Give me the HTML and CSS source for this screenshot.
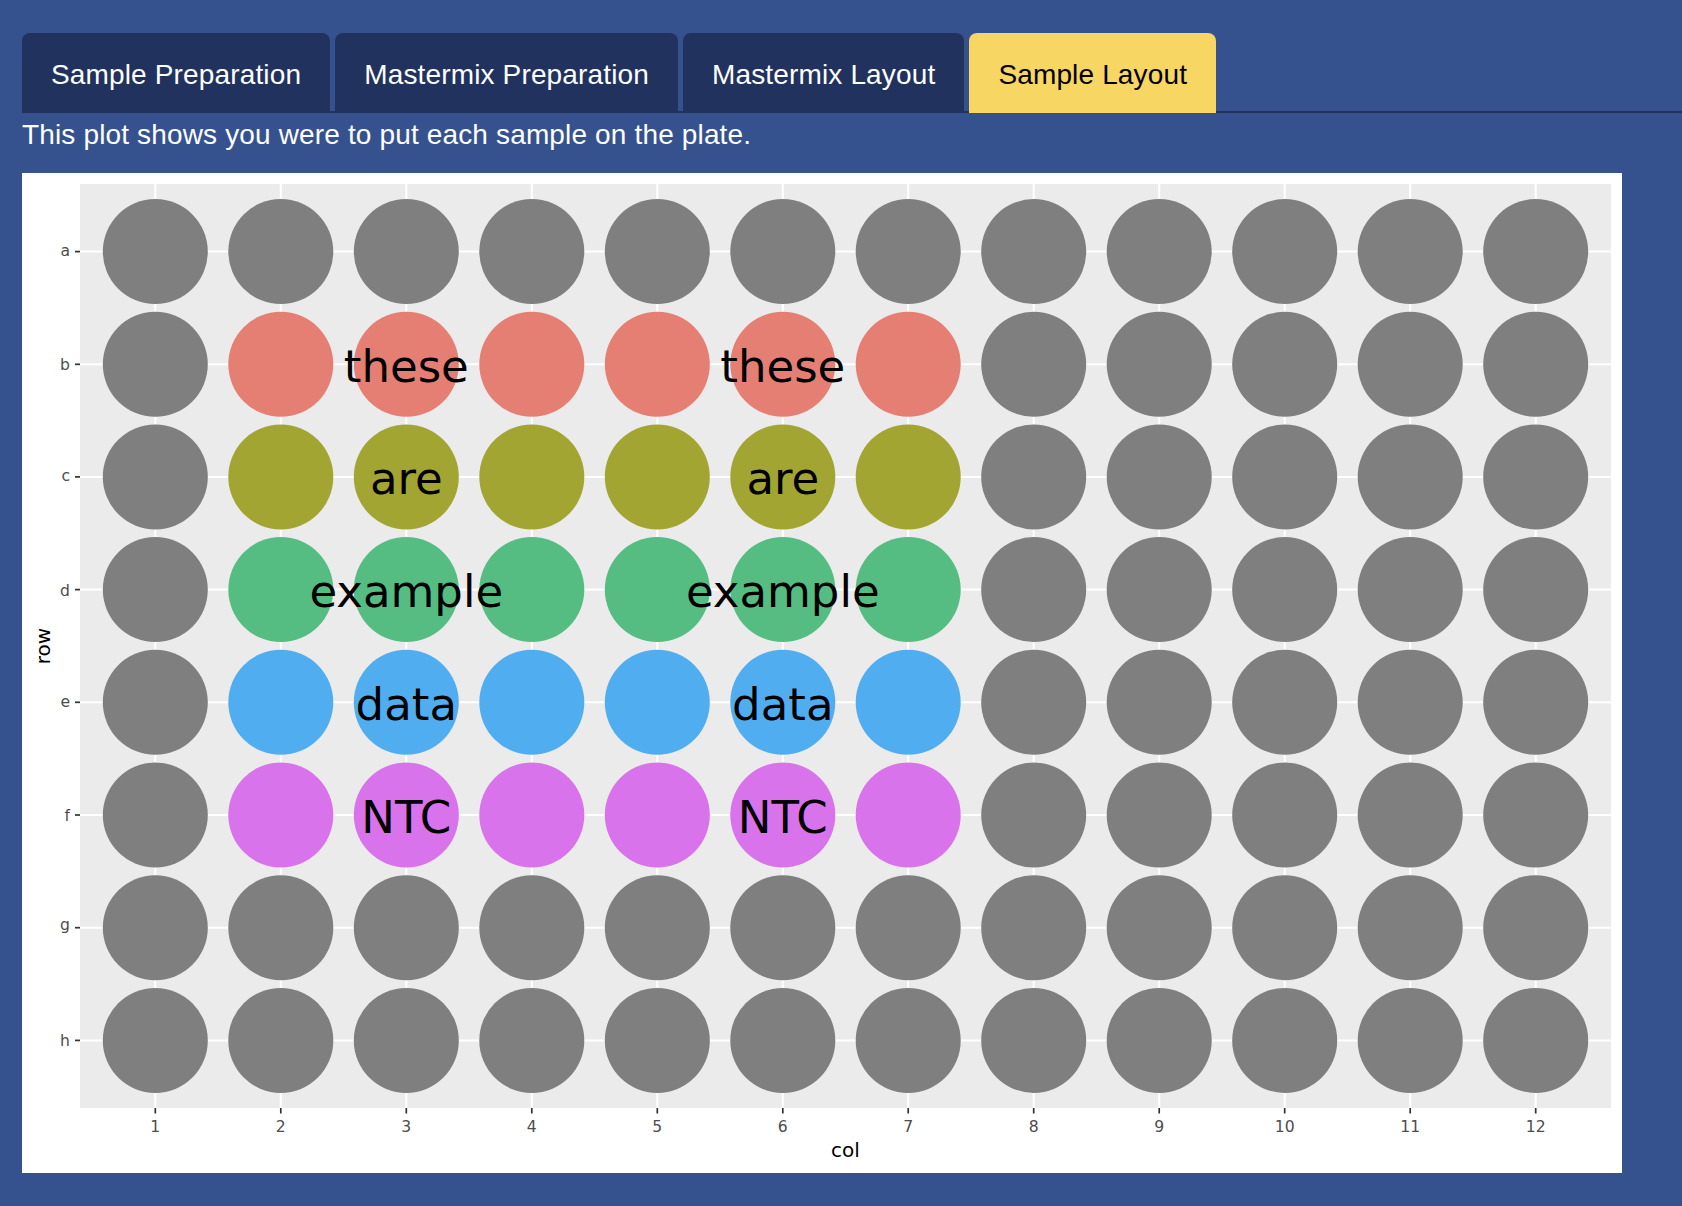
FILE: index.html
```html
<!DOCTYPE html>
<html lang="en">
<head>
<meta charset="utf-8">
<title>Sample Layout</title>
<link rel="stylesheet" href="styles.css">
</head>
<body>
<div class="page">
  <ul class="tabs">
    <li class="tab"><a>Sample Preparation</a></li>
    <li class="tab"><a>Mastermix Preparation</a></li>
    <li class="tab"><a>Mastermix Layout</a></li>
    <li class="tab active"><a>Sample Layout</a></li>
  </ul>
  <div class="tab-content">
    <p class="desc">This plot shows you were to put each sample on the plate.</p>
    <div class="plot">
      <svg class="chart" width="1600" height="1000" viewBox="0 0 1600 1000" xmlns="http://www.w3.org/2000/svg">
        <rect class="panel" x="58" y="11" width="1531" height="924"/>
        <g class="grid">
          <line x1="133.3" y1="11" x2="133.3" y2="935"/>
          <line x1="258.8" y1="11" x2="258.8" y2="935"/>
          <line x1="384.3" y1="11" x2="384.3" y2="935"/>
          <line x1="509.8" y1="11" x2="509.8" y2="935"/>
          <line x1="635.3" y1="11" x2="635.3" y2="935"/>
          <line x1="760.8" y1="11" x2="760.8" y2="935"/>
          <line x1="886.2" y1="11" x2="886.2" y2="935"/>
          <line x1="1011.7" y1="11" x2="1011.7" y2="935"/>
          <line x1="1137.2" y1="11" x2="1137.2" y2="935"/>
          <line x1="1262.7" y1="11" x2="1262.7" y2="935"/>
          <line x1="1388.2" y1="11" x2="1388.2" y2="935"/>
          <line x1="1513.7" y1="11" x2="1513.7" y2="935"/>
          <line x1="58" y1="78.6" x2="1589" y2="78.6"/>
          <line x1="58" y1="191.3" x2="1589" y2="191.3"/>
          <line x1="58" y1="303.9" x2="1589" y2="303.9"/>
          <line x1="58" y1="416.6" x2="1589" y2="416.6"/>
          <line x1="58" y1="529.3" x2="1589" y2="529.3"/>
          <line x1="58" y1="642" x2="1589" y2="642"/>
          <line x1="58" y1="754.7" x2="1589" y2="754.7"/>
          <line x1="58" y1="867.4" x2="1589" y2="867.4"/>
        </g>
        <!-- row a -->
        <g class="gray" transform="translate(0,78.6)">
          <circle cx="133.3" r="52.5"/><circle cx="258.8" r="52.5"/><circle cx="384.3" r="52.5"/><circle cx="509.8" r="52.5"/><circle cx="635.3" r="52.5"/><circle cx="760.8" r="52.5"/><circle cx="886.2" r="52.5"/><circle cx="1011.7" r="52.5"/><circle cx="1137.2" r="52.5"/><circle cx="1262.7" r="52.5"/><circle cx="1388.2" r="52.5"/><circle cx="1513.7" r="52.5"/>
        </g>
        <!-- row b -->
        <g transform="translate(0,191.3)">
          <g class="gray"><circle cx="133.3" r="52.5"/><circle cx="1011.7" r="52.5"/><circle cx="1137.2" r="52.5"/><circle cx="1262.7" r="52.5"/><circle cx="1388.2" r="52.5"/><circle cx="1513.7" r="52.5"/></g>
          <g class="c-red"><circle cx="258.8" r="52.5"/><circle cx="384.3" r="52.5"/><circle cx="509.8" r="52.5"/><circle cx="635.3" r="52.5"/><circle cx="760.8" r="52.5"/><circle cx="886.2" r="52.5"/></g>
        </g>
        <!-- row c -->
        <g transform="translate(0,303.9)">
          <g class="gray"><circle cx="133.3" r="52.5"/><circle cx="1011.7" r="52.5"/><circle cx="1137.2" r="52.5"/><circle cx="1262.7" r="52.5"/><circle cx="1388.2" r="52.5"/><circle cx="1513.7" r="52.5"/></g>
          <g class="c-olive"><circle cx="258.8" r="52.5"/><circle cx="384.3" r="52.5"/><circle cx="509.8" r="52.5"/><circle cx="635.3" r="52.5"/><circle cx="760.8" r="52.5"/><circle cx="886.2" r="52.5"/></g>
        </g>
        <!-- row d -->
        <g transform="translate(0,416.6)">
          <g class="gray"><circle cx="133.3" r="52.5"/><circle cx="1011.7" r="52.5"/><circle cx="1137.2" r="52.5"/><circle cx="1262.7" r="52.5"/><circle cx="1388.2" r="52.5"/><circle cx="1513.7" r="52.5"/></g>
          <g class="c-green"><circle cx="258.8" r="52.5"/><circle cx="384.3" r="52.5"/><circle cx="509.8" r="52.5"/><circle cx="635.3" r="52.5"/><circle cx="760.8" r="52.5"/><circle cx="886.2" r="52.5"/></g>
        </g>
        <!-- row e -->
        <g transform="translate(0,529.3)">
          <g class="gray"><circle cx="133.3" r="52.5"/><circle cx="1011.7" r="52.5"/><circle cx="1137.2" r="52.5"/><circle cx="1262.7" r="52.5"/><circle cx="1388.2" r="52.5"/><circle cx="1513.7" r="52.5"/></g>
          <g class="c-blue"><circle cx="258.8" r="52.5"/><circle cx="384.3" r="52.5"/><circle cx="509.8" r="52.5"/><circle cx="635.3" r="52.5"/><circle cx="760.8" r="52.5"/><circle cx="886.2" r="52.5"/></g>
        </g>
        <!-- row f -->
        <g transform="translate(0,642)">
          <g class="gray"><circle cx="133.3" r="52.5"/><circle cx="1011.7" r="52.5"/><circle cx="1137.2" r="52.5"/><circle cx="1262.7" r="52.5"/><circle cx="1388.2" r="52.5"/><circle cx="1513.7" r="52.5"/></g>
          <g class="c-magenta"><circle cx="258.8" r="52.5"/><circle cx="384.3" r="52.5"/><circle cx="509.8" r="52.5"/><circle cx="635.3" r="52.5"/><circle cx="760.8" r="52.5"/><circle cx="886.2" r="52.5"/></g>
        </g>
        <!-- row g -->
        <g class="gray" transform="translate(0,754.7)">
          <circle cx="133.3" r="52.5"/><circle cx="258.8" r="52.5"/><circle cx="384.3" r="52.5"/><circle cx="509.8" r="52.5"/><circle cx="635.3" r="52.5"/><circle cx="760.8" r="52.5"/><circle cx="886.2" r="52.5"/><circle cx="1011.7" r="52.5"/><circle cx="1137.2" r="52.5"/><circle cx="1262.7" r="52.5"/><circle cx="1388.2" r="52.5"/><circle cx="1513.7" r="52.5"/>
        </g>
        <!-- row h -->
        <g class="gray" transform="translate(0,867.4)">
          <circle cx="133.3" r="52.5"/><circle cx="258.8" r="52.5"/><circle cx="384.3" r="52.5"/><circle cx="509.8" r="52.5"/><circle cx="635.3" r="52.5"/><circle cx="760.8" r="52.5"/><circle cx="886.2" r="52.5"/><circle cx="1011.7" r="52.5"/><circle cx="1137.2" r="52.5"/><circle cx="1262.7" r="52.5"/><circle cx="1388.2" r="52.5"/><circle cx="1513.7" r="52.5"/>
        </g>
        <!-- sample labels -->
        <g class="well-label">
          <text x="384.3" y="208.8">these</text>
          <text x="760.8" y="208.8">these</text>
          <text x="384.3" y="321.4">are</text>
          <text x="760.8" y="321.4">are</text>
          <text x="384.3" y="434.1">example</text>
          <text x="760.8" y="434.1">example</text>
          <text x="384.3" y="546.8">data</text>
          <text x="760.8" y="546.8">data</text>
          <text x="384.3" y="659.5">NTC</text>
          <text x="760.8" y="659.5">NTC</text>
        </g>
        <!-- axis ticks -->
        <g class="tick">
          <line x1="53" y1="78.6" x2="58" y2="78.6"/>
          <line x1="53" y1="191.3" x2="58" y2="191.3"/>
          <line x1="53" y1="303.9" x2="58" y2="303.9"/>
          <line x1="53" y1="416.6" x2="58" y2="416.6"/>
          <line x1="53" y1="529.3" x2="58" y2="529.3"/>
          <line x1="53" y1="642" x2="58" y2="642"/>
          <line x1="53" y1="754.7" x2="58" y2="754.7"/>
          <line x1="53" y1="867.4" x2="58" y2="867.4"/>
          <line x1="133.3" y1="935" x2="133.3" y2="940.5"/>
          <line x1="258.8" y1="935" x2="258.8" y2="940.5"/>
          <line x1="384.3" y1="935" x2="384.3" y2="940.5"/>
          <line x1="509.8" y1="935" x2="509.8" y2="940.5"/>
          <line x1="635.3" y1="935" x2="635.3" y2="940.5"/>
          <line x1="760.8" y1="935" x2="760.8" y2="940.5"/>
          <line x1="886.2" y1="935" x2="886.2" y2="940.5"/>
          <line x1="1011.7" y1="935" x2="1011.7" y2="940.5"/>
          <line x1="1137.2" y1="935" x2="1137.2" y2="940.5"/>
          <line x1="1262.7" y1="935" x2="1262.7" y2="940.5"/>
          <line x1="1388.2" y1="935" x2="1388.2" y2="940.5"/>
          <line x1="1513.7" y1="935" x2="1513.7" y2="940.5"/>
        </g>
        <!-- axis labels -->
        <g class="axis-y">
          <text x="48" y="83">a</text>
          <text x="48" y="197.3">b</text>
          <text x="48" y="308.3">c</text>
          <text x="48" y="422.6">d</text>
          <text x="48" y="533.7">e</text>
          <text x="48" y="648">f</text>
          <text x="48" y="757.4">g</text>
          <text x="48" y="873.4">h</text>
        </g>
        <g class="axis-x">
          <text x="133.3" y="958.7">1</text>
          <text x="258.8" y="958.7">2</text>
          <text x="384.3" y="958.7">3</text>
          <text x="509.8" y="958.7">4</text>
          <text x="635.3" y="958.7">5</text>
          <text x="760.8" y="958.7">6</text>
          <text x="886.2" y="958.7">7</text>
          <text x="1011.7" y="958.7">8</text>
          <text x="1137.2" y="958.7">9</text>
          <text x="1262.7" y="958.7">10</text>
          <text x="1388.2" y="958.7">11</text>
          <text x="1513.7" y="958.7">12</text>
        </g>
        <text class="axis-title" x="823.5" y="984">col</text>
        <text class="axis-title" transform="translate(28,473) rotate(-90)">row</text>
      </svg>
    </div>
  </div>
</div>
</body>
</html>
```
FILE: styles.css
```css
html, body {
  margin: 0;
  padding: 0;
}

body {
  background: #35528f;
  font-family: "Liberation Sans", Arial, Helvetica, sans-serif;
  font-size: 28px;
  line-height: 40px;
  letter-spacing: 0.15px;
  color: #ffffff;
  min-height: 1206px;
}

.page {
  padding: 33px 0 0 22px;
}

.tabs {
  display: flex;
  margin: 0;
  padding: 0;
  list-style: none;
  border-bottom: 2px solid #22325e;
}

.tab {
  margin: 0 5px -2px 0;
}

.tab a {
  display: block;
  padding: 22px 29px 18px;
  line-height: 40px;
  background: #22325e;
  color: #ffffff;
  border-radius: 8px 8px 0 0;
  white-space: nowrap;
}

.tab.active a {
  background: #f7d664;
  color: #000000;
}

.tab-content {
  padding-top: 2px;
}

.desc {
  margin: 0 0 18px;
}

.plot {
  width: 1600px;
  height: 1000px;
  background: #ffffff;
}

.chart {
  display: block;
  font-family: "DejaVu Sans", Verdana, sans-serif;
  letter-spacing: 0;
}

.panel {
  fill: #ebebeb;
}

.grid line {
  stroke: #ffffff;
  stroke-width: 2;
}

.gray circle { fill: #7f7f7f; }
.c-red circle { fill: #e67f73; }
.c-olive circle { fill: #a3a533; }
.c-green circle { fill: #55bd82; }
.c-blue circle { fill: #50aef0; }
.c-magenta circle { fill: #d873eb; }

.well-label text {
  font-size: 45px;
  fill: #000000;
  text-anchor: middle;
}

.tick line {
  stroke: #333333;
  stroke-width: 1.7;
}

.axis-y text {
  font-size: 15.6px;
  fill: #4d4d4d;
  text-anchor: end;
}

.axis-x text {
  font-size: 15.6px;
  fill: #4d4d4d;
  text-anchor: middle;
}

.axis-title {
  font-size: 20px;
  fill: #000000;
  text-anchor: middle;
}
```
